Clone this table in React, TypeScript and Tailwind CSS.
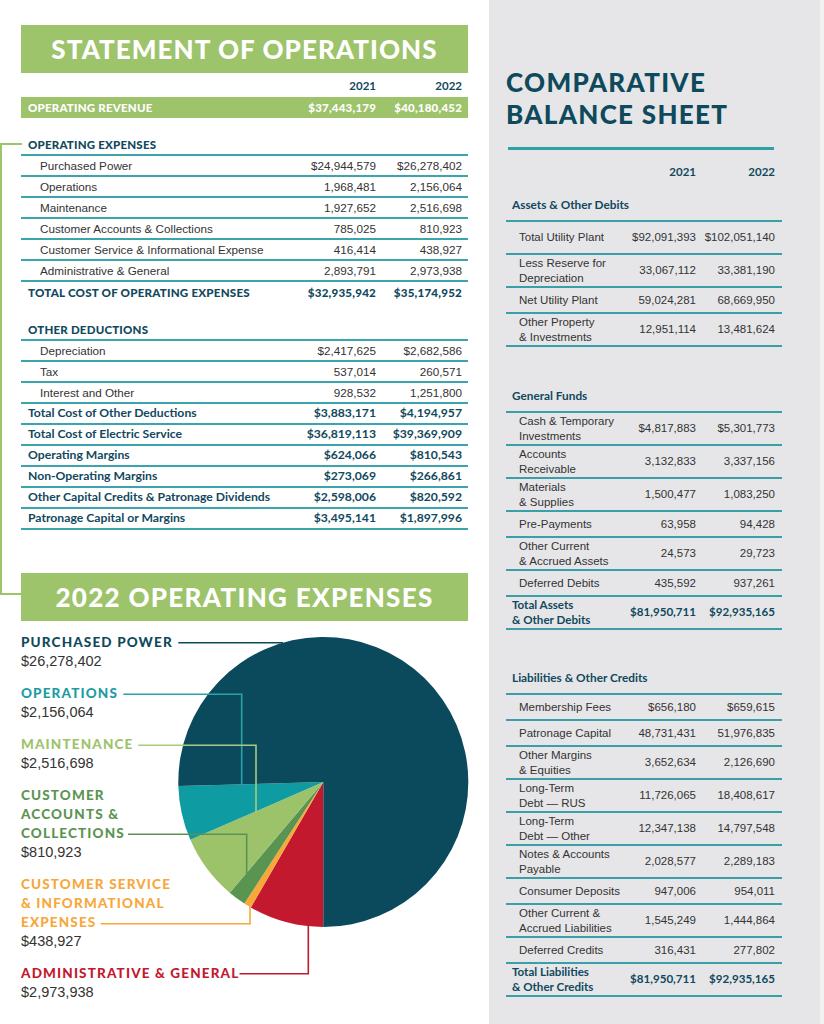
import React from "react";

type Row = { label: React.ReactNode; a: string; b: string; bold?: boolean };

const opRows: Row[] = [
  { label: "Purchased Power", a: "$24,944,579", b: "$26,278,402" },
  { label: "Operations", a: "1,968,481", b: "2,156,064" },
  { label: "Maintenance", a: "1,927,652", b: "2,516,698" },
  { label: "Customer Accounts & Collections", a: "785,025", b: "810,923" },
  { label: "Customer Service & Informational Expense", a: "416,414", b: "438,927" },
  { label: "Administrative & General", a: "2,893,791", b: "2,973,938" },
];

const dedRows: Row[] = [
  { label: "Depreciation", a: "$2,417,625", b: "$2,682,586" },
  { label: "Tax", a: "537,014", b: "260,571" },
  { label: "Interest and Other", a: "928,532", b: "1,251,800" },
  { label: "Total Cost of Other Deductions", a: "$3,883,171", b: "$4,194,957", bold: true },
  { label: "Total Cost of Electric Service", a: "$36,819,113", b: "$39,369,909", bold: true },
  { label: "Operating Margins", a: "$624,066", b: "$810,543", bold: true },
  { label: "Non-Operating Margins", a: "$273,069", b: "$266,861", bold: true },
  { label: "Other Capital Credits & Patronage Dividends", a: "$2,598,006", b: "$820,592", bold: true },
  { label: "Patronage Capital or Margins", a: "$3,495,141", b: "$1,897,996", bold: true },
];

function LRow({ r }: { r: Row }) {
  if (r.bold) {
    return (
      <div className="flex h-[21px] items-center border-b-2 border-[#3ba5ad] text-[12.2px] font-bold text-[#10495d] [font-family:Lato,sans-serif]">
        <div className="flex-1 whitespace-nowrap pl-[7px]">{r.label}</div>
        <div className="w-[90px] text-right">{r.a}</div>
        <div className="w-[92px] pr-[6px] text-right">{r.b}</div>
      </div>
    );
  }
  return (
    <div className="flex h-[21px] items-center border-b-2 border-[#3ba5ad] text-[11.7px] text-[#333333] [font-family:'Liberation_Sans',Arial,sans-serif]">
      <div className="flex-1 whitespace-nowrap pl-[19px]">{r.label}</div>
      <div className="w-[90px] text-right">{r.a}</div>
      <div className="w-[92px] pr-[6px] text-right">{r.b}</div>
    </div>
  );
}

type BRow = { label: React.ReactNode; a: string; b: string; tall?: boolean; total?: boolean };

const assets: BRow[] = [
  { label: "Total Utility Plant", a: "$92,091,393", b: "$102,051,140", tall: true },
  { label: <>Less Reserve for<br />Depreciation</>, a: "33,067,112", b: "33,381,190", tall: true },
  { label: "Net Utility Plant", a: "59,024,281", b: "68,669,950" },
  { label: <>Other Property<br />&amp; Investments</>, a: "12,951,114", b: "13,481,624", tall: true },
];

const funds: BRow[] = [
  { label: <>Cash &amp; Temporary<br />Investments</>, a: "$4,817,883", b: "$5,301,773", tall: true },
  { label: <>Accounts<br />Receivable</>, a: "3,132,833", b: "3,337,156", tall: true },
  { label: <>Materials<br />&amp; Supplies</>, a: "1,500,477", b: "1,083,250", tall: true },
  { label: "Pre-Payments", a: "63,958", b: "94,428" },
  { label: <>Other Current<br />&amp; Accrued Assets</>, a: "24,573", b: "29,723", tall: true },
  { label: "Deferred Debits", a: "435,592", b: "937,261" },
  { label: <>Total Assets<br />&amp; Other Debits</>, a: "$81,950,711", b: "$92,935,165", tall: true, total: true },
];

const liabs: BRow[] = [
  { label: "Membership Fees", a: "$656,180", b: "$659,615" },
  { label: "Patronage Capital", a: "48,731,431", b: "51,976,835" },
  { label: <>Other Margins<br />&amp; Equities</>, a: "3,652,634", b: "2,126,690", tall: true },
  { label: <>Long-Term<br />Debt — RUS</>, a: "11,726,065", b: "18,408,617", tall: true },
  { label: <>Long-Term<br />Debt — Other</>, a: "12,347,138", b: "14,797,548", tall: true },
  { label: <>Notes &amp; Accounts<br />Payable</>, a: "2,028,577", b: "2,289,183", tall: true },
  { label: "Consumer Deposits", a: "947,006", b: "954,011" },
  { label: <>Other Current &amp;<br />Accrued Liabilities</>, a: "1,545,249", b: "1,444,864", tall: true },
  { label: "Deferred Credits", a: "316,431", b: "277,802" },
  { label: <>Total Liabilities<br />&amp; Other Credits</>, a: "$81,950,711", b: "$92,935,165", tall: true, total: true },
];

function RRow({ r }: { r: BRow }) {
  const h = r.tall ? "h-[33px]" : "h-[26px]";
  if (r.total) {
    return (
      <div className={`flex ${h} items-center border-b-2 border-[#3a9fa8] text-[11.6px] font-bold leading-[14.5px] text-[#10495d] [font-family:Lato,sans-serif]`}>
        <div className="flex-1 whitespace-nowrap pl-[6px]">{r.label}</div>
        <div className="w-[70px] whitespace-nowrap text-right">{r.a}</div>
        <div className="w-[86px] whitespace-nowrap pr-[7px] text-right">{r.b}</div>
      </div>
    );
  }
  return (
    <div className={`flex ${h} items-center border-b-2 border-[#3a9fa8] text-[11.5px] leading-[15px] text-[#333333] [font-family:'Liberation_Sans',Arial,sans-serif]`}>
      <div className="flex-1 whitespace-nowrap pl-[13px]">{r.label}</div>
      <div className="w-[70px] whitespace-nowrap text-right">{r.a}</div>
      <div className="w-[86px] whitespace-nowrap pr-[7px] text-right">{r.b}</div>
    </div>
  );
}

function RSection({ title, rows, mt }: { title: string; rows: BRow[]; mt: string }) {
  return (
    <div className={mt}>
      <div className="pl-[6px] text-[11.8px] font-bold leading-[14px] text-[#10495d] [font-family:Lato,sans-serif]">{title}</div>
      <div className="mt-[8px] border-t-2 border-[#3a9fa8]">
        {rows.map((r, i) => (
          <RRow key={i} r={r} />
        ))}
      </div>
    </div>
  );
}

const CX = 323.3;
const CY = 161;
const R = 145;
function pt(a: number): [number, number] {
  const t = (a * Math.PI) / 180;
  return [CX + R * Math.cos(t), CY + R * Math.sin(t)];
}
function arc(a1: number, a2: number) {
  const [x1, y1] = pt(a1);
  const [x2, y2] = pt(a2);
  const large = a2 - a1 > 180 ? 1 : 0;
  return `M${CX},${CY} L${x1},${y1} A${R},${R} 0 ${large} 1 ${x2},${y2} Z`;
}

const slices = [
  { a1: 90, a2: 120, c: "#c3192f" },
  { a1: 120, a2: 123, c: "#f7a839" },
  { a1: 123, a2: 130.2, c: "#5a9451" },
  { a1: 130.2, a2: 156.5, c: "#9cc36a" },
  { a1: 156.5, a2: 178.4, c: "#0e9ba1" },
  { a1: 178.4, a2: 450, c: "#0b4a5d" },
];

function PieChart() {
  return (
    <svg className="absolute left-[-21px] top-0" width="489" height="404" viewBox="0 0 489 404">
      {slices.map((s, i) => (
        <path key={i} d={arc(s.a1, s.a2)} fill={s.c} />
      ))}
      <g fill="none" strokeWidth="1.6">
        <path d="M178.3,21.7 H283" stroke="#0f4a5c" />
        <path d="M123.3,73.3 H241.7 V163" stroke="#2aa2a8" />
        <path d="M138.3,124.3 H256 V191.7" stroke="#a9cb7c" />
        <path d="M128,213.3 H246.7 V253.3" stroke="#5b9452" />
        <path d="M100.7,302.7 H250 V284" stroke="#f6a83b" />
        <path d="M239.5,352.7 H308.3 V305" stroke="#c3192f" />
      </g>
    </svg>
  );
}

function Legend({ lines, amount, color }: { lines: string[]; amount: string; color: string }) {
  return (
    <div className="mb-[13px]">
      <div className={`text-[13.5px] font-black uppercase leading-[19px] tracking-[1.15px] [font-family:Lato,sans-serif] ${color}`}>
        {lines.map((l, i) => (
          <div key={i}>{l}</div>
        ))}
      </div>
      <div className="text-[14.5px] leading-[19px] text-[#333333] [font-family:'Liberation_Sans',Arial,sans-serif]">{amount}</div>
    </div>
  );
}

export default function App() {
  return (
    <div className="flex h-[1024px] w-[824px] overflow-hidden bg-white">
      {/* LEFT COLUMN */}
      <div className="relative w-[489px] shrink-0 px-[21px] pt-[25px]">
        <div className="absolute left-0 top-[143px] h-[452px] w-[22px] border-y-2 border-l-2 border-[#9dc36b]" />

        <div className="flex h-[48px] items-center justify-center bg-[#9dc36b] text-[26px] font-black tracking-[1.05px] text-white [font-family:Lato,sans-serif]">
          STATEMENT OF OPERATIONS
        </div>
        <div className="flex h-[24px] items-center pt-[2px] text-[11.5px] font-bold text-[#10495d] [font-family:Lato,sans-serif]">
          <div className="flex-1" />
          <div className="w-[90px] text-right">2021</div>
          <div className="w-[92px] pr-[6px] text-right">2022</div>
        </div>
        <div className="flex h-[21px] items-center bg-[#9dc36b] text-[11.5px] font-black tracking-[0.2px] text-white [font-family:Lato,sans-serif]">
          <div className="flex-1 pl-[7px]">OPERATING REVENUE</div>
          <div className="w-[90px] text-right">$37,443,179</div>
          <div className="w-[92px] pr-[6px] text-right">$40,180,452</div>
        </div>

        <div className="pb-[2px] pl-[7px] pt-[20px] text-[11.5px] font-black leading-[14px] tracking-[0.2px] text-[#10495d] [font-family:Lato,sans-serif]">
          OPERATING EXPENSES
        </div>
        <div className="border-t-2 border-[#3ba5ad]">
          {opRows.map((r, i) => (
            <LRow key={i} r={r} />
          ))}
        </div>
        <div className="flex h-[21px] items-center text-[11.6px] font-black tracking-[0.2px] text-[#10495d] [font-family:Lato,sans-serif]">
          <div className="flex-1 whitespace-nowrap pl-[7px]">TOTAL COST OF OPERATING EXPENSES</div>
          <div className="w-[90px] text-right">$32,935,942</div>
          <div className="w-[92px] pr-[6px] text-right">$35,174,952</div>
        </div>

        <div className="pb-[2px] pl-[7px] pt-[20px] text-[11.5px] font-black leading-[14px] tracking-[0.2px] text-[#10495d] [font-family:Lato,sans-serif]">
          OTHER DEDUCTIONS
        </div>
        <div className="border-t-2 border-[#3ba5ad]">
          {dedRows.map((r, i) => (
            <LRow key={i} r={r} />
          ))}
        </div>

        <div className="mt-[43px] flex h-[48px] items-center justify-center bg-[#9dc36b] text-[26px] font-black tracking-[1.3px] text-white [font-family:Lato,sans-serif]">
          2022 OPERATING EXPENSES
        </div>

        <div className="relative pt-[12px]">
          <PieChart />
          <div className="relative">
            <Legend lines={["Purchased Power"]} amount="$26,278,402" color="text-[#0f4a5c]" />
            <Legend lines={["Operations"]} amount="$2,156,064" color="text-[#1d9ca3]" />
            <Legend lines={["Maintenance"]} amount="$2,516,698" color="text-[#9dc36b]" />
            <Legend lines={["Customer", "Accounts &", "Collections"]} amount="$810,923" color="text-[#5b9452]" />
            <Legend lines={["Customer Service", "& Informational", "Expenses"]} amount="$438,927" color="text-[#f6a83b]" />
            <Legend lines={["Administrative & General"]} amount="$2,973,938" color="text-[#c3192f]" />
          </div>
        </div>
      </div>

      {/* RIGHT PANEL */}
      <div className="w-[331px] shrink-0 bg-[#e6e6e8] pl-[17px] pt-[66px]">
        <div className="text-[26px] font-black leading-[32px] tracking-[1.3px] text-[#0f4a5c] [font-family:Lato,sans-serif]">
          COMPARATIVE
          <br />
          BALANCE SHEET
        </div>
        <div className="ml-[2px] mt-[17px] h-[3px] w-[266px] bg-[#2fa0a7]" />
        <div className="mt-[15px] flex w-[276px] text-[11.5px] font-bold leading-[14px] text-[#10495d] [font-family:Lato,sans-serif]">
          <div className="flex-1" />
          <div className="w-[70px] text-right">2021</div>
          <div className="w-[86px] pr-[7px] text-right">2022</div>
        </div>
        <div className="w-[276px]">
          <RSection title="Assets & Other Debits" rows={assets} mt="mt-[19px]" />
          <RSection title="General Funds" rows={funds} mt="mt-[42px]" />
          <RSection title="Liabilities & Other Credits" rows={liabs} mt="mt-[41px]" />
        </div>
      </div>
      <div className="flex-1 bg-[#f1f1f2]" />
    </div>
  );
}
